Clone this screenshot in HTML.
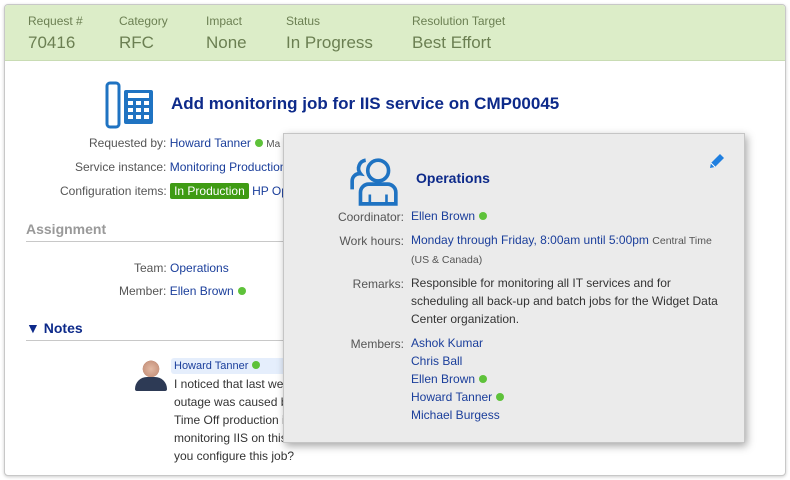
<!DOCTYPE html>
<html><head><style>
body{margin:0;width:790px;height:480px;background:#fff;font-family:"Liberation Sans",sans-serif;position:relative;overflow:hidden}
.card{position:absolute;left:4px;top:4px;width:780px;height:470px;border:1px solid #c8c8c8;border-radius:4px;box-shadow:0 1px 3px rgba(0,0,0,.2);overflow:hidden;background:#fff}
.hdr{position:absolute;left:0;top:0;width:100%;height:55px;background:#dcedc8;border-bottom:1px solid #c9dcb4}
.h{position:absolute;top:9px;color:#6b7f52}
.h .l{font-size:12px}
.h .v{font-size:17px;margin-top:5px}
.a{position:absolute;font-size:12px;white-space:nowrap}
.lab{color:#555}
.lnk{color:#1a3e9b}
.dot{display:inline-block;width:8px;height:8px;border-radius:50%;background:#5ec23a;margin-left:4px;vertical-align:0}
.pop{position:absolute;left:283px;top:133px;width:460px;height:308px;background:#ebebeb;border:1px solid #c5c5c5;box-shadow:2px 3px 8px rgba(0,0,0,.35)}
.pl{position:absolute;right:340px;text-align:right;font-size:12px;color:#555}
.pv{position:absolute;left:127px;font-size:12px;color:#333;line-height:18px}
</style></head><body>
<div class="card">
<div class="hdr">
<div class="h" style="left:23px"><div class="l">Request #</div><div class="v">70416</div></div>
<div class="h" style="left:114px"><div class="l">Category</div><div class="v">RFC</div></div>
<div class="h" style="left:201px"><div class="l">Impact</div><div class="v">None</div></div>
<div class="h" style="left:281px"><div class="l">Status</div><div class="v">In Progress</div></div>
<div class="h" style="left:407px"><div class="l">Resolution Target</div><div class="v">Best Effort</div></div>
</div>
<svg style="position:absolute;left:100px;top:76px" width="50" height="50" viewBox="0 0 50 50">
<rect x="2" y="2" width="12" height="44" rx="3" fill="none" stroke="#1f73c2" stroke-width="3"/>
<rect x="19" y="9" width="29" height="34" rx="2" fill="#1f73c2"/>
<g fill="#fff"><rect x="23" y="12" width="21" height="5"/>
<rect x="23" y="20" width="5" height="4"/><rect x="31" y="20" width="5" height="4"/><rect x="39" y="20" width="5" height="4"/>
<rect x="23" y="27" width="5" height="4"/><rect x="31" y="27" width="5" height="4"/><rect x="39" y="27" width="5" height="4"/>
<rect x="23" y="34" width="5" height="4"/><rect x="31" y="34" width="5" height="4"/><rect x="39" y="34" width="5" height="4"/></g>
</svg>
<div style="position:absolute;left:166px;top:89px;font-size:17px;font-weight:bold;color:#0d2a8a">Add monitoring job for IIS service on CMP00045</div>
<div class="a" style="left:84px;top:131px"><span class="lab">Requested by:</span> <span class="lnk">Howard Tanner</span><span class="dot"></span> <span class="lab" style="font-size:10px">Ma</span></div>
<div class="a" style="left:70px;top:155px"><span class="lab">Service instance:</span> <span class="lnk">Monitoring Production</span></div>
<div class="a" style="left:55px;top:179px"><span class="lab">Configuration items:</span> <span style="background:#3f9b14;color:#fff;border-radius:2px;padding:1px 4px">In Production</span> <span class="lnk">HP Op</span></div>
<div style="position:absolute;left:21px;top:216px;width:300px;border-bottom:1px solid #c8c8c8;font-size:14px;font-weight:bold;color:#999;padding-bottom:4px">Assignment</div>
<div class="a" style="left:129px;top:256px"><span class="lab">Team:</span> <span class="lnk">Operations</span></div>
<div class="a" style="left:114px;top:279px"><span class="lab">Member:</span> <span class="lnk">Ellen Brown</span><span class="dot"></span></div>
<div style="position:absolute;left:21px;top:315px;width:300px;border-bottom:1px solid #c8c8c8;font-size:14px;font-weight:bold;color:#0d2a8a;padding-bottom:4px">▼ Notes</div>
<div style="position:absolute;left:130px;top:352px;width:32px;height:34px;border-radius:3px;background:radial-gradient(circle at 50% 35%,#e2b9a3 0,#c99680 30%,#fff 31%) ,#fff"></div>
<div style="position:absolute;left:130px;top:372px;width:32px;height:14px;background:#2d3a55;border-radius:12px 12px 2px 2px"></div>
<div style="position:absolute;left:166px;top:353px;width:120px;height:16px;background:#e5eefc;border-radius:3px"></div>
<div class="a" style="left:169px;top:355px;font-size:11px"><span class="lnk">Howard Tanner</span><span class="dot"></span></div>
<div style="position:absolute;left:169px;top:370px;font-size:12px;color:#333;line-height:18px">I noticed that last we<br>outage was caused b<br>Time Off production i<br>monitoring IIS on this<br>you configure this job?</div>
</div>
<div class="pop">
<svg style="position:absolute;left:64px;top:21px" width="52" height="52" viewBox="0 0 50 50">
<g fill="none" stroke="#1f73c2" stroke-width="3.5">
<circle cx="29" cy="15" r="10"/>
<path d="M12 47 V36 a8 8 0 0 1 8-8 h18 a8 8 0 0 1 8 8 V47 Z"/>
<path d="M21 38 V47 M37 38 V47" stroke-width="2.5"/>
<path d="M17 5 a8 8 0 0 0-5 13 a7 7 0 0 0-8 7 v8"/>
</g></svg>
<div style="position:absolute;left:132px;top:36px;font-size:14px;font-weight:bold;color:#0d2a8a">Operations</div>
<svg style="position:absolute;left:424px;top:18px" width="18" height="18" viewBox="0 0 18 18"><path d="M2 16 L3 11 L12 2 L16 6 L7 15 Z" fill="#1f7fe0"/><path d="M3 11 L7 15" stroke="#fff" stroke-width="1"/></svg>
<div class="pl" style="top:76px">Coordinator:</div><div class="pv" style="top:73px"><span class="lnk">Ellen Brown</span><span class="dot"></span></div>
<div class="pl" style="top:100px">Work hours:</div><div class="pv" style="top:97px"><span class="lnk">Monday through Friday, 8:00am until 5:00pm</span> <span style="font-size:10.5px;color:#555">Central Time<br>(US &amp; Canada)</span></div>
<div class="pl" style="top:143px">Remarks:</div><div class="pv" style="top:140px">Responsible for monitoring all IT services and for<br>scheduling all back-up and batch jobs for the Widget Data<br>Center organization.</div>
<div class="pl" style="top:203px">Members:</div><div class="pv lnk" style="top:200px"><span class="lnk">Ashok Kumar</span><br><span class="lnk">Chris Ball</span><br><span class="lnk">Ellen Brown</span><span class="dot"></span><br><span class="lnk">Howard Tanner</span><span class="dot"></span><br><span class="lnk">Michael Burgess</span></div>
</div>
</body></html>
